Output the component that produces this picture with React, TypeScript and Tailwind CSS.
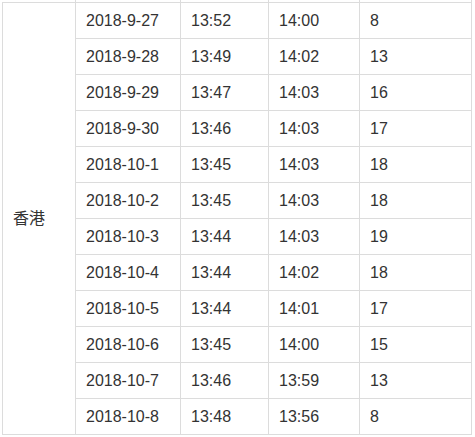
const rows: [string, string, string, string][] = [
  ['2018-9-27', '13:52', '14:00', '8'],
  ['2018-9-28', '13:49', '14:02', '13'],
  ['2018-9-29', '13:47', '14:03', '16'],
  ['2018-9-30', '13:46', '14:03', '17'],
  ['2018-10-1', '13:45', '14:03', '18'],
  ['2018-10-2', '13:45', '14:03', '18'],
  ['2018-10-3', '13:44', '14:03', '19'],
  ['2018-10-4', '13:44', '14:02', '18'],
  ['2018-10-5', '13:44', '14:01', '17'],
  ['2018-10-6', '13:45', '14:00', '15'],
  ['2018-10-7', '13:46', '13:59', '13'],
  ['2018-10-8', '13:48', '13:56', '8'],
]

const widths = ['w-[105px]', 'w-[88px]', 'w-[91px]', 'w-[113px]']

export default function App() {
  return (
    <div
      className="h-[437px] w-[475px] overflow-hidden bg-white pl-[2px] text-[16px] text-[#333]"
      style={{ fontFamily: '"Liberation Sans", Arial, "Noto Sans CJK SC", sans-serif' }}
    >
      <div className="flex">
        <div className="mt-[2px] flex h-[433px] w-[73px] items-center border-t border-b border-l border-[#dcdcdc] pl-[10px]">
          香港
        </div>
        <div className="flex flex-col">
          <div className="flex h-[2px]">
            {widths.map((w, i) => (
              <div key={i} className={`${w} border-l border-[#dcdcdc] ${i === 3 ? 'border-r' : ''}`} />
            ))}
          </div>
          {rows.map((r) => (
            <div key={r[0]} className="flex h-[36px]">
              {r.map((cell, i) => (
                <div
                  key={i}
                  className={`${widths[i]} flex items-center border-t border-l border-[#dcdcdc] pl-[10px] ${i === 3 ? 'border-r' : ''}`}
                >
                  {cell}
                </div>
              ))}
            </div>
          ))}
          <div className="h-[1px] border-t border-[#dcdcdc]" />
        </div>
      </div>
    </div>
  )
}
